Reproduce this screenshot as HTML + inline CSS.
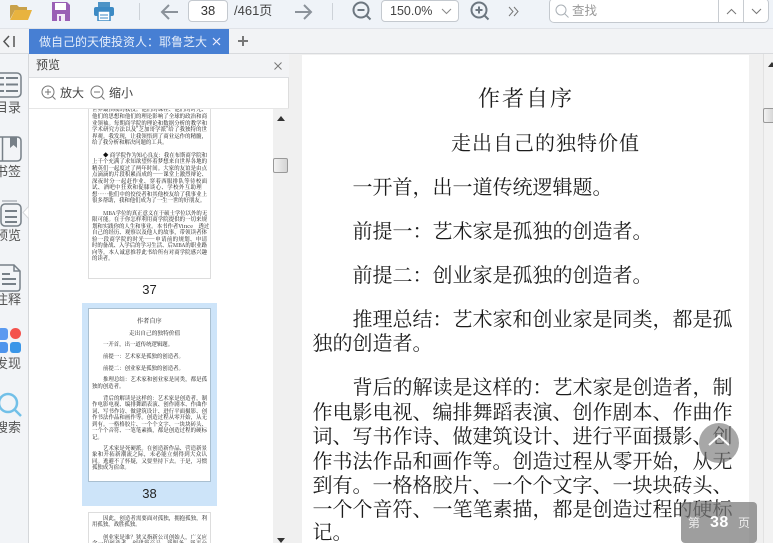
<!DOCTYPE html>
<html lang="zh"><head><meta charset="utf-8"><style>
*{box-sizing:border-box}
html,body{margin:0;padding:0;width:773px;height:543px;overflow:hidden}
body{position:relative;background:#f0f0f0;font-family:"Liberation Sans","Noto Sans CJK SC",sans-serif;color:#333}
.a{position:absolute}
.t{position:absolute;white-space:nowrap}
.m{position:absolute;white-space:nowrap;font-family:"Liberation Serif","Noto Serif CJK SC",serif;font-size:20px;line-height:24px;color:#1c1c1c}
.j{left:312.5px;width:419px;text-align:justify;text-align-last:justify}
.s{position:absolute;left:3px;width:115px;white-space:nowrap;font-family:"Noto Serif CJK SC",serif;font-size:5.4px;line-height:7px;color:#111;text-align:justify;text-align-last:justify}
.n{text-align-last:left}
svg{position:absolute;display:block}
.side{position:absolute;left:-6px;width:28px;text-align:center;font-size:13px;line-height:16px;color:#555}
</style></head><body>

<div class="a" style="left:0;top:0;width:773px;height:29px;background:#eff3f8;border-bottom:1px solid #e0e3e8"></div>
<svg style="left:9px;top:2px" width="24" height="20" viewBox="0 0 24 20"><path d="M1 17V4q0-1 1-1h6l2 2h8v3H6z" fill="#c9a14a"/><path d="M1 18L6 8h17l-4 10z" fill="#e8b33f"/></svg>
<svg style="left:52px;top:1px" width="18" height="20" viewBox="0 0 18 20"><path d="M0 1h15l3 3v16H0z" fill="#9a5fb5"/><rect x="3" y="2" width="11" height="7" fill="#fff"/><rect x="5" y="13" width="8" height="7" fill="#f3e9f7"/><rect x="7" y="15" width="2" height="5" fill="#9a5fb5"/></svg>
<svg style="left:94px;top:2px" width="20" height="19" viewBox="0 0 20 19"><rect x="4" y="0" width="12" height="5" fill="#4d93c6"/><rect x="0" y="5" width="20" height="9" rx="2" fill="#3d8ac4"/><rect x="4" y="9" width="12" height="10" fill="#fff" stroke="#3d8ac4" stroke-width="1.5"/><path d="M6 13h8M6 16h8" stroke="#3d8ac4"/></svg>
<div class="a" style="left:139px;top:3px;width:1px;height:17px;background:#cdd2d8"></div>
<svg style="left:160px;top:3px" width="18" height="18" viewBox="0 0 18 18" fill="none" stroke="#8b929a" stroke-width="2"><path d="M18 9H2M9 2L2 9l7 7"/></svg>
<div class="a" style="left:188px;top:0;width:40px;height:22px;background:#fff;border:1px solid #c4c9cf;border-radius:4px;font-size:13px;line-height:20px;text-align:center">38</div>
<div class="t" style="left:234px;top:2px;font-size:13px;line-height:18px;color:#444">/461页</div>
<svg style="left:295px;top:3px" width="18" height="18" viewBox="0 0 18 18" fill="none" stroke="#8b929a" stroke-width="2"><path d="M0 9h16M9 2l7 7-7 7"/></svg>
<div class="a" style="left:332px;top:3px;width:1px;height:17px;background:#cdd2d8"></div>
<svg style="left:352px;top:1px" width="20" height="20" viewBox="0 0 20 20" fill="none" stroke="#6d7780" stroke-width="2"><circle cx="9" cy="9" r="7.5"/><path d="M5.500 9h7M14 14l4.500 4.500" /></svg>
<div class="a" style="left:381px;top:0;width:78px;height:22px;background:#fff;border:1px solid #c4c9cf;border-radius:4px"></div>
<div class="t" style="left:390px;top:2px;font-size:12.500px;line-height:18px;color:#444">150.0%</div>
<svg style="left:441px;top:8px" width="11" height="7" viewBox="0 0 11 7" fill="none" stroke="#888"><path d="M1 1l4.500 4.500L10 1"/></svg>
<svg style="left:470px;top:1px" width="20" height="20" viewBox="0 0 20 20" fill="none" stroke="#6d7780" stroke-width="2"><circle cx="9" cy="9" r="7.500"/><path d="M5.500 9h7M9 5.500v7M14 14l4.500 4.500"/></svg>
<svg style="left:508px;top:6px" width="12" height="11" viewBox="0 0 12 11" fill="none" stroke="#777"><path d="M1 1l4 4.500-4 4.500M6 1l4 4.500-4 4.500"/></svg>
<div class="a" style="left:549px;top:-2px;width:220px;height:25px;background:#fff;border:1px solid #c4c9cf;border-radius:5px"></div>
<div class="a" style="left:718px;top:0;width:1px;height:22px;background:#c8ccd1"></div>
<div class="a" style="left:743px;top:0;width:1px;height:22px;background:#c8ccd1"></div>
<svg style="left:555px;top:4px" width="14" height="14" viewBox="0 0 14 14" fill="none" stroke="#aab0b6"><circle cx="6" cy="6" r="5"/><path d="M9.500 9.500l4 4"/></svg>
<div class="t" style="left:572px;top:2px;font-size:12.500px;line-height:18px;color:#999">查找</div>
<svg style="left:726px;top:8px" width="11" height="7" viewBox="0 0 11 7" fill="none" stroke="#777"><path d="M1 6l4.500-4.500L10 6"/></svg>
<svg style="left:751px;top:8px" width="11" height="7" viewBox="0 0 11 7" fill="none" stroke="#777"><path d="M1 1l4.500 4.500L10 1"/></svg>

<div class="a" style="left:0;top:29px;width:773px;height:25px;background:#f2f3f5;border-bottom:1px solid #d8dadd"></div>
<svg style="left:2px;top:35px" width="14" height="13" viewBox="0 0 14 13" fill="none" stroke="#555" stroke-width="1.500"><path d="M7 1L2 6.500 7 12M12 1v11"/></svg>
<div class="a" style="left:29px;top:29px;width:200px;height:25px;background:#477fd3"></div>
<div class="t" style="left:39px;top:33px;width:170px;overflow:hidden;font-size:12px;line-height:18px;color:#e6eefa">做自己的天使投资人：耶鲁芝大</div>
<svg style="left:212px;top:37px" width="9" height="9" viewBox="0 0 9 9" stroke="#eef" stroke-width="1.200"><path d="M1 1l7 7M8 1l-7 7"/></svg>
<svg style="left:237px;top:35px" width="12" height="12" viewBox="0 0 12 12" stroke="#777" stroke-width="2"><path d="M6 1v10M1 6h10"/></svg>

<div class="a" style="left:0;top:54px;width:29px;height:489px;background:#f2f4f7;border-right:1px solid #d5d7da"></div>
<svg style="left:0;top:71px" width="24" height="28" viewBox="0 0 24 28" fill="none" stroke="#778088" stroke-width="1.500"><rect x="-6" y="2" width="27" height="24" rx="4"/><path d="M0 7h4M6 7h12M0 13.500h4M6 13.500h12M0 20h4M6 20h12" stroke-width="2"/></svg>
<div class="side" style="top:100px">目录</div>
<svg style="left:0;top:135px" width="24" height="28" viewBox="0 0 24 28" fill="none" stroke="#778088" stroke-width="1.500"><path d="M-3 2H17q4 0 4 4v16q0 4-4 4H-3M2.500 2v24"/><path d="M10 2h7v11l-3.500-3L10 13z" fill="#778088" stroke="none"/></svg>
<div class="side" style="top:164px">书签</div>
<svg style="left:0;top:200px" width="24" height="28" viewBox="0 0 24 28" fill="none" stroke="#778088" stroke-width="1.500"><path d="M2 1h15" stroke="#b0b5ba"/><rect x="1" y="4" width="20" height="22" rx="4"/><path d="M5 11h12M5 17h12M5 22h12" stroke-width="2"/></svg>
<div class="side" style="top:228px">预览</div>
<svg style="left:22px;top:206px" width="7" height="13" viewBox="0 0 7 13"><path d="M7 0L1 6.500 7 13z" fill="#fff" stroke="#d5d7da"/></svg>
<svg style="left:-1px;top:264px" width="24" height="28" viewBox="0 0 24 28" fill="none" stroke="#778088" stroke-width="1.500"><path d="M-1 1h16l6 6v17q0 3-3 3H-1M15 1v6h6"/><path d="M3 10h8M3 15h14M3 20h14" stroke-width="2"/></svg>
<div class="side" style="top:292px">注释</div>
<div class="a" style="left:-2px;top:328px;width:10px;height:12px;background:#5b9af0;border-radius:3px"></div>
<div class="a" style="left:10px;top:328px;width:11px;height:11px;background:#f4524d;border-radius:50%"></div>
<div class="a" style="left:-2px;top:342px;width:10px;height:11px;background:#4d93ec;border-radius:3px"></div>
<div class="a" style="left:10px;top:342px;width:11px;height:11px;background:#3a96e8;border-radius:3px"></div>
<div class="side" style="top:356px">发现</div>
<svg style="left:-3px;top:392px" width="25" height="26" viewBox="0 0 25 26" fill="none" stroke="#72c0e8" stroke-width="2.500"><circle cx="11" cy="11" r="9"/><path d="M18 18l6 6"/></svg>
<div class="side" style="top:420px">搜索</div>

<div class="a" style="left:29px;top:54px;width:260px;height:489px;background:#fff;border-right:1px solid #ddd"></div>
<div class="a" style="left:29px;top:54px;width:260px;height:24px;background:#f2f3f5;border-bottom:1px solid #dcdee1"></div>
<div class="t" style="left:36px;top:57px;font-size:12px;line-height:17px;color:#444">预览</div>
<svg style="left:274px;top:62px" width="8" height="8" viewBox="0 0 8 8" stroke="#777"><path d="M.5.500l7 7M7.500.500l-7 7"/></svg>
<div class="a" style="left:29px;top:108px;width:260px;height:1px;background:#e6e6e6"></div>
<svg style="left:41px;top:85px" width="15" height="15" viewBox="0 0 15 15" fill="none" stroke="#777"><circle cx="7" cy="7" r="6"/><path d="M4 7h6M7 4v6M11.500 11.500l3 3"/></svg>
<div class="t" style="left:60px;top:85px;font-size:12px;line-height:17px;color:#444">放大</div>
<svg style="left:90px;top:85px" width="15" height="15" viewBox="0 0 15 15" fill="none" stroke="#777"><circle cx="7" cy="7" r="6"/><path d="M4 7h6M11.500 11.500l3 3"/></svg>
<div class="t" style="left:109px;top:85px;font-size:12px;line-height:17px;color:#444">缩小</div>

<div class="a" style="left:273px;top:109px;width:16px;height:434px;background:#f0f0f0"></div>
<svg style="left:277px;top:116px" width="8" height="5" viewBox="0 0 8 5"><path d="M4 0l4 5H0z" fill="#333"/></svg>
<div class="a" style="left:273px;top:158px;width:15px;height:15px;background:linear-gradient(90deg,#f2f2f2,#d4d4d4);border:1px solid #999;border-radius:2px"></div>
<svg style="left:277px;top:538px" width="8" height="5" viewBox="0 0 8 5"><path d="M0 0h8L4 5z" fill="#333"/></svg>

<div class="a" style="left:88px;top:100px;width:123px;height:179px;background:#fff;border:1px solid #ddd;overflow:hidden;clip-path:inset(9px 0 0 0)">
<div class="s" style="top:5px">世界最顶级的教授。他们的课程、他们的时光、</div>
<div class="s" style="top:12px">他们的思想和他们的理论影响了全球的政治和商</div>
<div class="s" style="top:18.500px">业领袖。每期商学院的理论和数据分析的教学和</div>
<div class="s" style="top:25px">学术研究方法以及"芝加哥学派"给了我独特的世</div>
<div class="s" style="top:31.500px">界观。我发现，让我领悟到了商业运作的精髓，</div>
<div class="s n" style="top:38px">给了我分析和解决问题的工具。</div>
<div class="s" style="top:50.500px;text-indent:11px">◆ 商学院作为知心良友：我在布斯商学院和</div>
<div class="s" style="top:57px">上千个充满了求知欲望怀着梦想来自世界各地的</div>
<div class="s" style="top:63.500px">精英们一起度过了两年时间。大家的友谊是由点</div>
<div class="s" style="top:70px">点滴滴的片段积累而成的——课堂上激烈辩论、</div>
<div class="s" style="top:76.500px">深夜时分一起赶作业、穿着西服排队等待校面</div>
<div class="s n" style="top:83px;letter-spacing:.4px">试、酒吧中狂欢和促膝谈心、学校外互助理</div>
<div class="s" style="top:89.500px">想……他们中的佼佼者和其他校友给了我事业上</div>
<div class="s n" style="top:96px">很多帮助，我和他们成为了一生一世的好朋友。</div>
<div class="s" style="top:108.500px;text-indent:11px">MBA学位的真正意义在于硕士学位以外的无</div>
<div class="s" style="top:115px">限可能。在于你怎样利用商学院提供的一切来规</div>
<div class="s" style="top:121.500px">划和实践你的人生和事业。本书作者Vince　透过</div>
<div class="s" style="top:128px">自己的经历、观察以及他人的故事，带领读者体</div>
<div class="s" style="top:134.500px">验一段商学院的时光——申请前的规划、申请</div>
<div class="s" style="top:141px">时的备战、入学后的学习生活、后MBA的职业路</div>
<div class="s" style="top:147.500px">向等。本人诚意推荐此书给所有对商学院感兴趣</div>
<div class="s n" style="top:154px">的读者。</div>
</div>
<div class="t" style="left:88px;top:281px;width:123px;text-align:center;font-size:13px;line-height:17px;color:#222">37</div>

<div class="a" style="left:82px;top:303px;width:135px;height:203px;background:#cde4f9"></div>
<div class="a" style="left:88px;top:308px;width:123px;height:174px;background:#fff;border:1px solid #a9bfd0;overflow:hidden">
<div class="s n" style="left:48px;width:auto;top:7.500px;font-size:6.200px">作者自序</div>
<div class="s n" style="left:40px;width:auto;top:20px;font-size:5.700px">走出自己的独特价值</div>
<div class="s n" style="top:31.500px;left:14px">一开首，出一道传统逻辑题。</div>
<div class="s n" style="top:43.500px;left:14px">前提一：艺术家是孤独的创造者。</div>
<div class="s n" style="top:55.500px;left:14px">前提二：创业家是孤独的创造者。</div>
<div class="s" style="top:67px;text-indent:11px">推理总结：艺术家和创业家是同类，都是孤</div>
<div class="s n" style="top:73.500px">独的创造者。</div>
<div class="s" style="top:85.500px;text-indent:11px">背后的解读是这样的：艺术家是创造者，制</div>
<div class="s" style="top:92px">作电影电视、编排舞蹈表演、创作剧本、作曲作</div>
<div class="s" style="top:98.500px">词、写书作诗、做建筑设计、进行平面摄影、创</div>
<div class="s" style="top:105px">作书法作品和画作等。创造过程从零开始，从无</div>
<div class="s" style="top:111.500px">到有。一格格胶片、一个个文字、一块块砖头、</div>
<div class="s" style="top:118px">一个个音符、一笔笔素描，都是创造过程的硬标</div>
<div class="s n" style="top:124.500px">记。</div>
<div class="s" style="top:135.500px;text-indent:11px">艺术家是死硬派。在创造新作品、营造新景</div>
<div class="s" style="top:142px">象和开拓新潮流之际，未必能立刻得到大众认</div>
<div class="s" style="top:148.500px">同。逃避不了怀疑，又要坚持下去。于是，习惯</div>
<div class="s n" style="top:155px">孤独成为宿命。</div>
</div>
<div class="t" style="left:88px;top:485px;width:123px;text-align:center;font-size:13px;line-height:17px;color:#222">38</div>

<div class="a" style="left:88px;top:512px;width:123px;height:40px;background:#fff;border:1px solid #ddd;overflow:hidden">
<div class="s" style="top:1.500px;text-indent:11px">因此，创造者需要面对孤独，拥抱孤独，利</div>
<div class="s n" style="top:8px">用孤独，战胜孤独。</div>
<div class="s" style="top:20.500px;text-indent:11px">创业家是谁？狭义指新公司创始人，广义应</div>
<div class="s" style="top:27px">含一切创造者，创建新产品、新服务、新平台</div>
</div>

<div class="a" style="left:289px;top:54px;width:474px;height:489px;background:#f0f0f0"></div>
<div class="a" style="left:302px;top:55px;width:447px;height:488px;background:#fff"></div>
<div class="a" style="left:763px;top:54px;width:10px;height:489px;background:#f2f2f2;border-left:1px solid #e2e2e2"></div>
<svg style="left:768px;top:62px" width="5" height="5" viewBox="0 0 5 5"><path d="M4 0l4 5H0z" fill="#333"/></svg>
<div class="a" style="left:763px;top:108px;width:12px;height:15px;background:linear-gradient(90deg,#f2f2f2,#d4d4d4);border:1px solid #999;border-radius:2px"></div>

<div class="m" style="left:478px;top:86px;font-size:22px;line-height:26px;letter-spacing:2px">作者自序</div>
<div class="m" style="left:451px;top:132px;letter-spacing:1px">走出自己的独特价值</div>
<div class="m" style="left:352.500px;top:176px">一开首，出一道传统逻辑题。</div>
<div class="m" style="left:352.500px;top:220px">前提一：艺术家是孤独的创造者。</div>
<div class="m" style="left:352.500px;top:264px">前提二：创业家是孤独的创造者。</div>
<div class="m j" style="top:308px;text-indent:40px">推理总结：艺术家和创业家是同类，都是孤</div>
<div class="m" style="left:312.500px;top:332px">独的创造者。</div>
<div class="m j" style="top:376px;text-indent:40px">背后的解读是这样的：艺术家是创造者，制</div>
<div class="m j" style="top:401px">作电影电视、编排舞蹈表演、创作剧本、作曲作</div>
<div class="m j" style="top:425px">词、写书作诗、做建筑设计、进行平面摄影、创</div>
<div class="m j" style="top:450px">作书法作品和画作等。创造过程从零开始，从无</div>
<div class="m j" style="top:474px">到有。一格格胶片、一个个文字、一块块砖头、</div>
<div class="m j" style="top:498px">一个个音符、一笔笔素描，都是创造过程的硬标</div>
<div class="m" style="left:312.500px;top:521px">记。</div>

<div class="a" style="left:699px;top:423px;width:40px;height:40px;border-radius:50%;background:rgba(120,120,120,.65)"></div>
<svg style="left:708px;top:434px" width="22" height="12" viewBox="0 0 22 12" fill="none" stroke="#fff" stroke-width="2"><path d="M1 11L11 2l10 9"/></svg>
<div class="a" style="left:681px;top:502px;width:76px;height:41px;border-radius:4px;background:rgba(120,120,120,.72)"></div>
<div class="t" style="left:688px;top:515px;font-size:12px;line-height:16px;color:#eee">第</div>
<div class="t" style="left:710px;top:513px;font-size:16px;line-height:20px;font-weight:bold;color:#fff;letter-spacing:.5px">38</div>
<div class="t" style="left:738px;top:515px;font-size:12px;line-height:16px;color:#eee">页</div>
</body></html>
